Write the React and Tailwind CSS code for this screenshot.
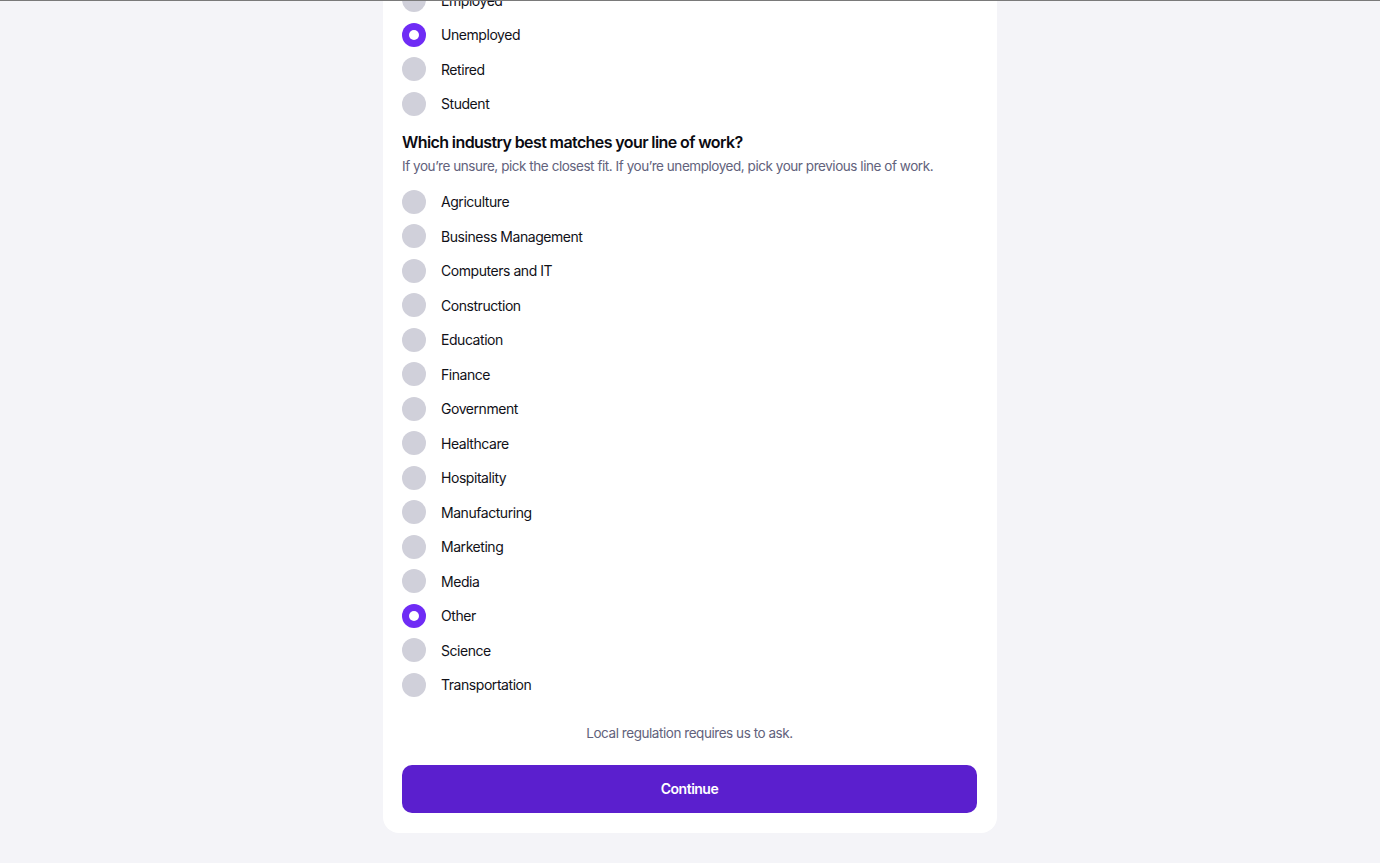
import React, { useState } from "react";

const statuses = ["Employed", "Unemployed", "Retired", "Student"];

const industries = [
  "Agriculture",
  "Business Management",
  "Computers and IT",
  "Construction",
  "Education",
  "Finance",
  "Government",
  "Healthcare",
  "Hospitality",
  "Manufacturing",
  "Marketing",
  "Media",
  "Other",
  "Science",
  "Transportation",
];

function RadioRow({ label, checked, onSelect }) {
  return (
    <label
      onClick={onSelect}
      className="flex items-center h-6 cursor-pointer"
    >
      <span
        className={`flex items-center justify-center w-6 h-6 rounded-full shrink-0 ${
          checked ? "bg-[#6f2cf5]" : "bg-[#d0d0da]"
        }`}
      >
        {checked && <span className="w-2.5 h-2.5 rounded-full bg-white" />}
      </span>
      <span className="ml-[15px] text-[14px] text-[#111118] tracking-[-0.45px]">
        {label}
      </span>
    </label>
  );
}

function RadioGroup({ options, value, onChange }) {
  return (
    <div className="flex flex-col gap-[10.5px]">
      {options.map((option) => (
        <RadioRow
          key={option}
          label={option}
          checked={value === option}
          onSelect={() => onChange(option)}
        />
      ))}
    </div>
  );
}

export default function App() {
  const [status, setStatus] = useState("Unemployed");
  const [industry, setIndustry] = useState("Other");

  return (
    <div
      className="min-h-screen bg-[#f4f4f8] border-t border-[#7a7a7a] overflow-hidden"
      style={{ fontFamily: "Inter, 'Noto Sans', sans-serif" }}
    >
      <div className="w-[614px] mx-auto -mt-[13px] bg-white rounded-b-2xl pl-[19px] pr-5 pb-5">
        {/* employment status */}
        <RadioGroup options={statuses} value={status} onChange={setStatus} />

        {/* industry */}
        <h2 className="mt-[14px] text-[16px] leading-6 font-semibold text-[#0b0b12] tracking-[-0.6px]">
          Which industry best matches your line of work?
        </h2>
        <p className="mt-0.5 text-[13.5px] leading-5 text-[#62627c] tracking-[-0.45px] whitespace-nowrap">
          If you’re unsure, pick the closest fit. If you’re unemployed, pick
          your previous line of work.
        </p>
        <div className="mt-[14px]">
          <RadioGroup
            options={industries}
            value={industry}
            onChange={setIndustry}
          />
        </div>

        <p className="mt-[26px] text-center text-[13.5px] leading-5 text-[#62627c] tracking-[-0.45px]">
          Local regulation requires us to ask.
        </p>

        <button className="mt-[22px] w-full h-12 rounded-[10px] bg-[#5b1fce] text-white text-[14px] font-semibold tracking-[-0.5px]">
          Continue
        </button>
      </div>
    </div>
  );
}
